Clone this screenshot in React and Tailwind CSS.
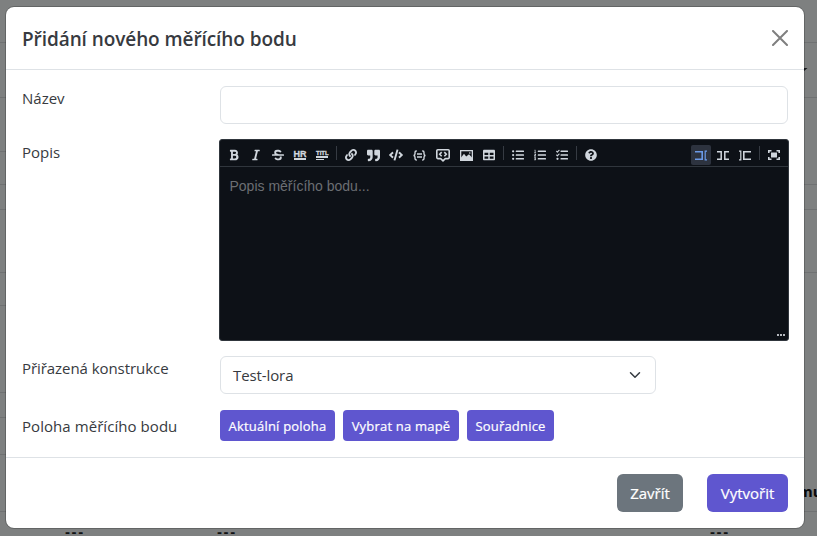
import React, { useState } from 'react';
import {
  FaBold,
  FaItalic,
  FaStrikethrough,
  FaLink,
  FaQuoteRight,
  FaCode,
  FaTable,
  FaListUl,
  FaListOl,
  FaTasks,
  FaQuestionCircle,
} from 'react-icons/fa';

const backgroundRows = [
  { height: 'h-[43px]', right: true },
  { height: 'h-[55px]', right: true, caret: true },
  { height: 'h-[54px]', right: false },
  { height: 'h-[33px]', right: true },
  { height: 'h-[25px]', right: true },
  { height: 'h-[63px]', right: true },
  { height: 'h-[33px]', right: false },
  { height: 'h-[87px]', right: false },
  { height: 'h-[25px]', right: false },
  { height: 'h-[37px]', right: false },
  { height: 'h-[57px]', right: true, text: 'mu' },
];

const HrIcon = () => (
  <span className="flex w-3 flex-col items-center">
    <span className="font-['Liberation_Sans'] text-[9px] leading-[8px] font-bold [-webkit-text-stroke:0.3px]">HR</span>
    <span className="h-[2px] w-3 bg-current" />
  </span>
);

const TitleIcon = () => (
  <span className="flex w-3 flex-col items-start">
    <span className="w-3 font-['Liberation_Sans'] text-[6px] leading-[6px] font-bold [-webkit-text-stroke:0.3px]">TITL</span>
    <span className="h-[2px] w-3 bg-current" />
    <span className="mt-px h-px w-2 bg-current" />
  </span>
);

const CodeBlockIcon = () => (
  <svg width="13" height="11" viewBox="0 0 13 11" fill="none" stroke="currentColor" strokeWidth="1.4">
    <path d="M3.8 1h-.6C2.2 1 2 1.5 2 2.4v1.4c0 1-.4 1.500-1.400 1.700 1 .2 1.400.7 1.400 1.700v1.400c0 .9.2 1.400 1.200 1.400h.6" />
    <path d="M9.200 1h.6c1 0 1.200.5 1.200 1.400v1.400c0 1 .4 1.500 1.400 1.700-1 .2-1.400.7-1.400 1.700v1.400c0 .9-.2 1.400-1.200 1.400h-.6" />
    <path d="M4 4h5M4 7h5" />
  </svg>
);

const CommentIcon = () => (
  <svg className="mt-px" width="14" height="13" viewBox="0 0 14 13" fill="none" stroke="currentColor" strokeWidth="1.6">
    <path d="M1.800.8h10.400c.6 0 1 .4 1 1v6.800c0 .6-.4 1-1 1H9.300L7 11.800 4.700 9.600H1.800c-.6 0-1-.4-1-1V1.800c0-.6.4-1 1-1z" strokeLinejoin="round" />
    <path d="M5.700 3.100L3.700 5.200l2 2.100M8.300 3.100l2 2.100-2 2.100" />
  </svg>
);

const ImageIcon = () => (
  <svg width="13" height="11" viewBox="0 0 13 11" fill="none" stroke="currentColor" strokeWidth="1.3">
    <rect x=".65" y=".65" width="11.7" height="9.7" />
    <path d="M1 10V7.500l3-3.700 2.200 2.700L9 4.300l3 3.200V10z" fill="currentColor" stroke="none" />
    <circle cx="9.8" cy="3" r=".8" fill="currentColor" stroke="none" />
  </svg>
);

const EditIcon = () => (
  <svg width="12" height="11" viewBox="0 0 12 11" fill="none" stroke="currentColor" strokeWidth="1.6">
    <path d="M0 1.800h7.200v7.400H0" />
    <path d="M12 1.200h-1.800v8.600H12" strokeWidth="1.2" />
  </svg>
);

const LiveIcon = () => (
  <svg width="12" height="11" viewBox="0 0 12 11" fill="none" stroke="currentColor" strokeWidth="1.5">
    <path d="M0 1.800h4.200v7.400H0M12 1.800H7.800v7.400H12" />
  </svg>
);

const PreviewIcon = () => (
  <svg width="12" height="11" viewBox="0 0 12 11" fill="none" stroke="currentColor" strokeWidth="1.6">
    <path d="M12 1.800H4.800v7.400H12" />
    <path d="M0 1.200h1.800v8.600H0" strokeWidth="1.2" />
  </svg>
);

const FullscreenIcon = () => (
  <svg width="12" height="10" viewBox="0 0 12 10" fill="none" stroke="currentColor" strokeWidth="1.6">
    <path d="M.8 3V.8h2.700M8.500.8h2.700V3M11.200 7v2.200H8.500M3.500 9.200H.8V7" />
    <rect x="3" y="2.5" width="6" height="5" fill="currentColor" stroke="none" />
  </svg>
);

const leftTools = [
  { name: 'bold', icon: <FaBold size={12} />, width: 'w-[22px]' },
  { name: 'italic', icon: <FaItalic size={12} />, width: 'w-[22px]' },
  { name: 'strikethrough', icon: <FaStrikethrough size={12} />, width: 'w-[22px]' },
  { name: 'hr', icon: <HrIcon />, width: 'w-[22px]' },
  { name: 'title', icon: <TitleIcon />, width: 'w-[22px]' },
  { divider: true },
  { name: 'link', icon: <FaLink size={12} />, width: 'w-[22px]' },
  { name: 'quote', icon: <FaQuoteRight size={13} />, width: 'w-[22px]' },
  { name: 'code', icon: <FaCode size={14} />, width: 'w-6' },
  { name: 'codeBlock', icon: <CodeBlockIcon />, width: 'w-[23px]' },
  { name: 'comment', icon: <CommentIcon />, width: 'w-6' },
  { name: 'image', icon: <ImageIcon />, width: 'w-[23px]' },
  { name: 'table', icon: <FaTable size={12} />, width: 'w-[22px]' },
  { divider: true },
  { name: 'unordered', icon: <FaListUl size={12} />, width: 'w-[22px]' },
  { name: 'ordered', icon: <FaListOl size={12} />, width: 'w-[22px]' },
  { name: 'checked', icon: <FaTasks size={12} />, width: 'w-[22px]' },
  { divider: true },
  { name: 'help', icon: <FaQuestionCircle size={12} />, width: 'w-[22px]' },
];

const viewTools = [
  { name: 'edit', icon: <EditIcon />, width: 'w-[22px]' },
  { name: 'live', icon: <LiveIcon />, width: 'w-[22px]' },
  { name: 'preview', icon: <PreviewIcon />, width: 'w-[22px]' },
  { divider: true },
  { name: 'fullscreen', icon: <FullscreenIcon />, width: 'w-[22px]' },
];

const Toolbar = ({ tools, active, onSelect }) => (
  <div className="flex items-center">
    {tools.map((tool, i) =>
      tool.divider ? (
        <span key={i} className="mx-[3px] mb-1 h-[14px] w-px bg-[#363b43]" />
      ) : (
        <button
          key={tool.name}
          type="button"
          aria-label={tool.name}
          onClick={() => onSelect && onSelect(tool.name)}
          className={`${tool.width} flex h-5 items-center justify-center px-px`}
        >
          <span
            className={`flex h-5 w-full items-center justify-center rounded-[2px] pt-px ${
              active === tool.name ? 'bg-[#2d333f] text-[#6b9ae8]' : 'text-[#d0d6dd]'
            }`}
          >
            {tool.icon}
          </span>
        </button>
      )
    )}
  </div>
);

const Background = () => (
  <div className="h-full bg-[#7e8080]">
    {backgroundRows.map((row, i) => (
      <div key={i} className={`${row.height} flex justify-between`}>
        <div className="w-6 border-b border-[#6f7172]" />
        <div className={`flex w-6 ${row.right ? 'border-b border-[#6f7172]' : ''}`}>
          {row.caret && (
            <svg className="mt-[25px] ml-[5px] shrink-0" width="10" height="4" viewBox="0 0 10 4">
              <path d="M0 0h9.500L5 4z" fill="#16181b" />
            </svg>
          )}
          {row.text && (
            <span className="mt-[26px] ml-[5px] text-[15px] leading-5 font-bold text-[#08090a]">{row.text}</span>
          )}
        </div>
      </div>
    ))}
    <div className="flex h-6 pt-[10px] pl-[65px] font-['Liberation_Sans',sans-serif] text-[15px] leading-5 font-bold tracking-[1.6px] text-[#101214]">
      <span className="w-[152px]">---</span>
      <span className="w-[493px]">---</span>
      <span>---</span>
    </div>
  </div>
);

const App = () => {
  const [name, setName] = useState('');
  const [description, setDescription] = useState('');
  const [view, setView] = useState('edit');

  return (
    <div className="relative h-[536px] w-[817px] overflow-hidden font-['Open_Sans',sans-serif] text-[#373a40]">
      <Background />

      <div className="absolute inset-0 px-[6px] pt-[7px]">
        <div className="flex h-[521px] w-[798px] flex-col rounded-lg bg-white outline outline-[#00000035]">
          <div className="flex h-[63px] shrink-0 items-center justify-between border-b border-[#dee2e6] px-4">
            <h5 className="pt-[2px] text-[19px] font-semibold tracking-[-0.08px] whitespace-nowrap">Přidání nového měřícího bodu</h5>
            <button type="button" aria-label="Zavřít">
              <svg width="16" height="16" viewBox="0 0 16 16" stroke="#7f7f7f" strokeWidth="2" strokeLinecap="round">
                <path d="M1 1l14 14M15 1L1 15" />
              </svg>
            </button>
          </div>

          <div className="h-[387px] shrink-0 px-4 pt-4 text-[15px]">
            <div className="flex">
              <label className="w-[198px] leading-6">Název</label>
              <input
                value={name}
                onChange={(e) => setName(e.target.value)}
                className="h-[38px] w-[568px] rounded-md border border-[#dee2e6] px-3"
              />
            </div>

            <div className="mt-[15px] flex">
              <label className="w-[197px] shrink-0 pt-px leading-6">Popis</label>
              <div className="flex h-[202px] w-[570px] shrink-0 flex-col rounded-[3px] border border-[#30363d] bg-[#0d1117]">
                <div className="flex h-[27px] justify-between border-b border-[#30363d] px-[3px] pt-[3px]">
                  <Toolbar tools={leftTools} />
                  <Toolbar tools={viewTools} active={view} onSelect={setView} />
                </div>
                <textarea
                  value={description}
                  onChange={(e) => setDescription(e.target.value)}
                  placeholder="Popis měřícího bodu..."
                  className="min-h-0 flex-1 resize-none px-[9.5px] pt-[10px] font-['Liberation_Sans',sans-serif] text-sm leading-[18px] text-[#c9d1d9] outline-none placeholder:text-[#6b6e73]"
                />
                <div className="flex h-2 justify-end gap-px pt-[2px] pr-[3px]">
                  <span className="size-[2px] bg-[#b5b9be]" />
                  <span className="size-[2px] bg-[#b5b9be]" />
                  <span className="size-[2px] bg-[#b5b9be]" />
                </div>
              </div>
            </div>

            <div className="mt-[15px] flex">
              <label className="w-[198px] leading-6 tracking-[-0.06px]">Přiřazená konstrukce</label>
              <button
                type="button"
                className="flex h-[38px] w-[436px] items-center justify-between rounded-md border border-[#dee2e6] pr-[14px] pl-3"
              >
                <span className="tracking-[-0.1px]">Test-lora</span>
                <svg width="12" height="12" viewBox="0 0 16 16" fill="none" stroke="#343a40" strokeWidth="2" strokeLinecap="round" strokeLinejoin="round">
                  <path d="m2 5 6 6 6-6" />
                </svg>
              </button>
            </div>

            <div className="mt-4 flex gap-2 text-[13px] font-medium tracking-[0.2px] text-white">
              <label className="mr-[-8px] w-[198px] pt-1 text-[15px] leading-6 font-normal tracking-[0.06px] text-[#373a40]">Poloha měřícího bodu</label>
              <button type="button" className="h-[31px] w-[115px] rounded-[4px] bg-[#5f56cf] pt-[2px] whitespace-nowrap [-webkit-text-stroke:0.2px]">Aktuální poloha</button>
              <button type="button" className="h-[31px] w-[116px] rounded-[4px] bg-[#5f56cf] pt-[2px] whitespace-nowrap [-webkit-text-stroke:0.2px]">Vybrat na mapě</button>
              <button type="button" className="h-[31px] w-[87px] rounded-[4px] bg-[#5f56cf] pt-[2px] whitespace-nowrap [-webkit-text-stroke:0.2px]">Souřadnice</button>
            </div>
          </div>

          <div className="flex flex-1 justify-end gap-6 border-t border-[#dee2e6] px-4 pt-4 text-[15px] font-medium text-white">
            <button type="button" className="h-[38px] w-[66px] rounded-md bg-[#6c757d] [-webkit-text-stroke:0.2px]">Zavřít</button>
            <button type="button" className="h-[38px] w-[81px] rounded-md bg-[#5f56cf] [-webkit-text-stroke:0.2px]">Vytvořit</button>
          </div>
        </div>
      </div>
    </div>
  );
};

export default App;
